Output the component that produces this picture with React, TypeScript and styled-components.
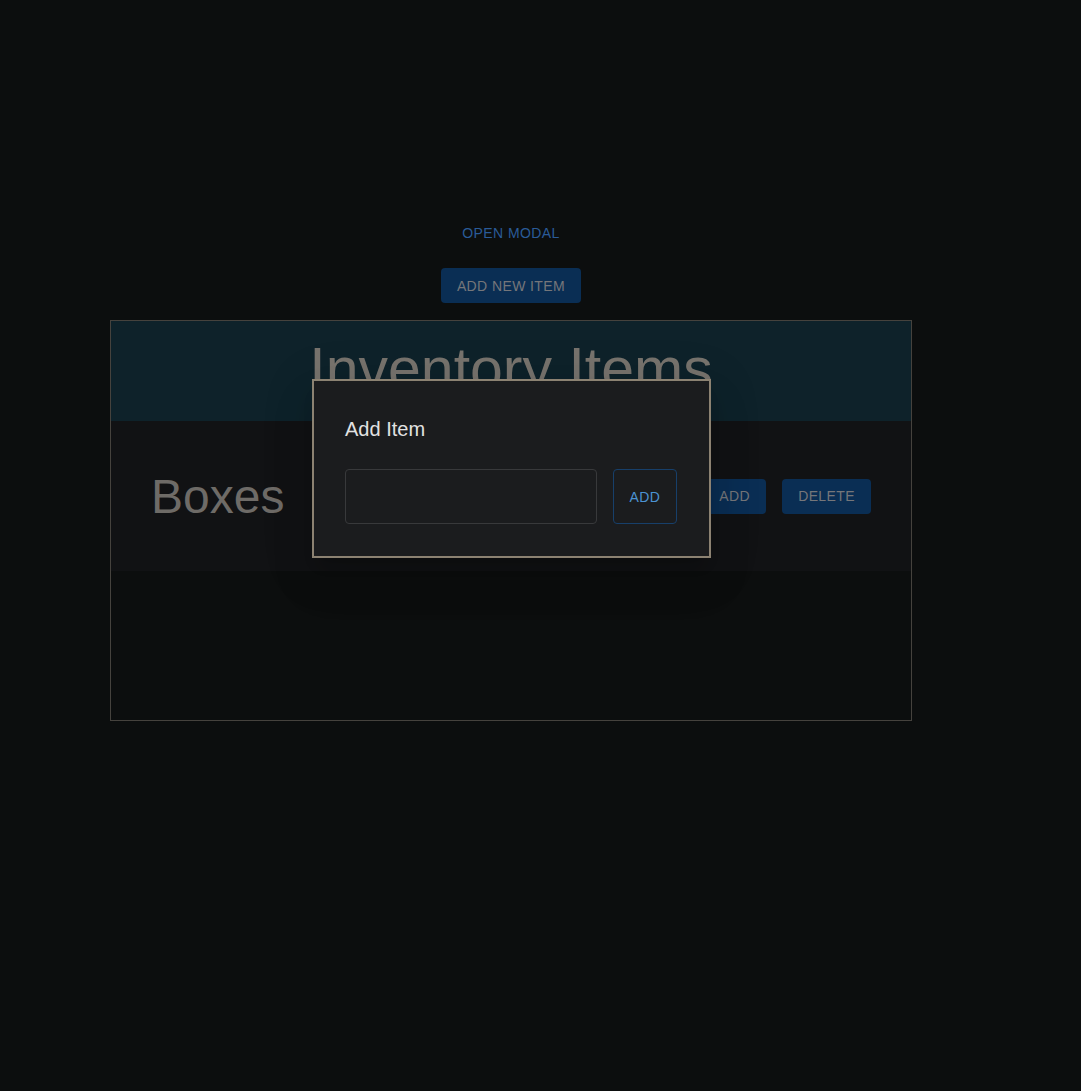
import React, { useState } from "react";
import styled, { createGlobalStyle } from "styled-components";

const GlobalStyle = createGlobalStyle`
    html, body {
        margin: 0;
        padding: 0;
        background: #0c0e0e;
        font-family: "Liberation Sans", Arial, sans-serif;
    }
`;

const Page = styled.div`
    position: relative;
    width: 1022px;
    min-height: 1091px;
    padding-top: 215px;
    box-sizing: border-box;
    display: flex;
    flex-direction: column;
    align-items: center;
    gap: 17px;
`;

const TextButton = styled.button`
    background: none;
    border: none;
    height: 36px;
    padding: 6px 8px;
    color: #2a5b98;
    font-family: inherit;
    font-size: 14px;
    letter-spacing: 0.4px;
    text-transform: uppercase;
    cursor: pointer;
`;

const FilledButton = styled.button`
    background: #0a2e54;
    border: none;
    border-radius: 4px;
    height: 35px;
    padding: 0 16px;
    color: #75767a;
    font-family: inherit;
    font-size: 14px;
    letter-spacing: 0.4px;
    text-transform: uppercase;
    cursor: pointer;
`;

const Card = styled.div`
    width: 802px;
    height: 401px;
    box-sizing: border-box;
    border: 1px solid #45423d;
    display: flex;
    flex-direction: column;
`;

const Header = styled.div`
    height: 100px;
    background: #0e222a;
    display: flex;
    justify-content: center;
    align-items: center;
`;

const Title = styled.h1`
    margin: 0;
    font-size: 59px;
    font-weight: normal;
    color: #77736d;
    line-height: 1;
    transform: translateY(-2px);
`;

const Row = styled.div`
    height: 150px;
    background: #111214;
    display: flex;
    align-items: center;
    padding: 0 40px;
`;

const RowName = styled.h2`
    flex: 1;
    margin: 0;
    font-size: 48px;
    font-weight: normal;
    color: #6e6b67;
`;

const Actions = styled.div`
    display: flex;
    gap: 16px;
`;

const Dialog = styled.div`
    position: absolute;
    left: 312px;
    top: 379px;
    width: 399px;
    box-sizing: border-box;
    padding: 32px 31px;
    background: #1b1c1e;
    border: 2px solid #8c8272;
    box-shadow: 0 11px 15px -7px rgba(0, 0, 0, 0.16), 0 24px 38px 3px rgba(0, 0, 0, 0.1),
        0 9px 46px 8px rgba(0, 0, 0, 0.08);
`;

const DialogTitle = styled.h3`
    margin: 0 0 24px;
    font-size: 20px;
    line-height: 32px;
    font-weight: normal;
    color: #e2e2e2;
`;

const Form = styled.div`
    display: flex;
    gap: 16px;
`;

const Input = styled.input`
    width: 252px;
    height: 55px;
    box-sizing: border-box;
    background: transparent;
    border: 1px solid #38393b;
    border-radius: 4px;
    color: #e2e2e2;
    padding: 0 14px;
    font-family: inherit;
    font-size: 16px;
    outline: none;
`;

const OutlinedButton = styled.button`
    width: 64px;
    height: 55px;
    background: transparent;
    border: 1px solid #173f6a;
    border-radius: 4px;
    color: #4b92d2;
    font-family: inherit;
    font-size: 14px;
    letter-spacing: 0.4px;
    text-transform: uppercase;
    cursor: pointer;
`;

export default function App() {
    const [open, setOpen] = useState(true);
    const [name, setName] = useState("");

    return (
        <>
            <GlobalStyle />
            <Page>
                <TextButton onClick={() => setOpen(true)}>Open modal</TextButton>
                <FilledButton onClick={() => setOpen(true)}>Add new item</FilledButton>
                <Card>
                    <Header>
                        <Title>Inventory Items</Title>
                    </Header>
                    <Row>
                        <RowName>Boxes</RowName>
                        <Actions>
                            <FilledButton>Add</FilledButton>
                            <FilledButton>Delete</FilledButton>
                        </Actions>
                    </Row>
                </Card>
                {open && (
                    <Dialog>
                        <DialogTitle>Add Item</DialogTitle>
                        <Form>
                            <Input value={name} onChange={(e) => setName(e.target.value)} />
                            <OutlinedButton onClick={() => setOpen(false)}>Add</OutlinedButton>
                        </Form>
                    </Dialog>
                )}
            </Page>
        </>
    );
}
